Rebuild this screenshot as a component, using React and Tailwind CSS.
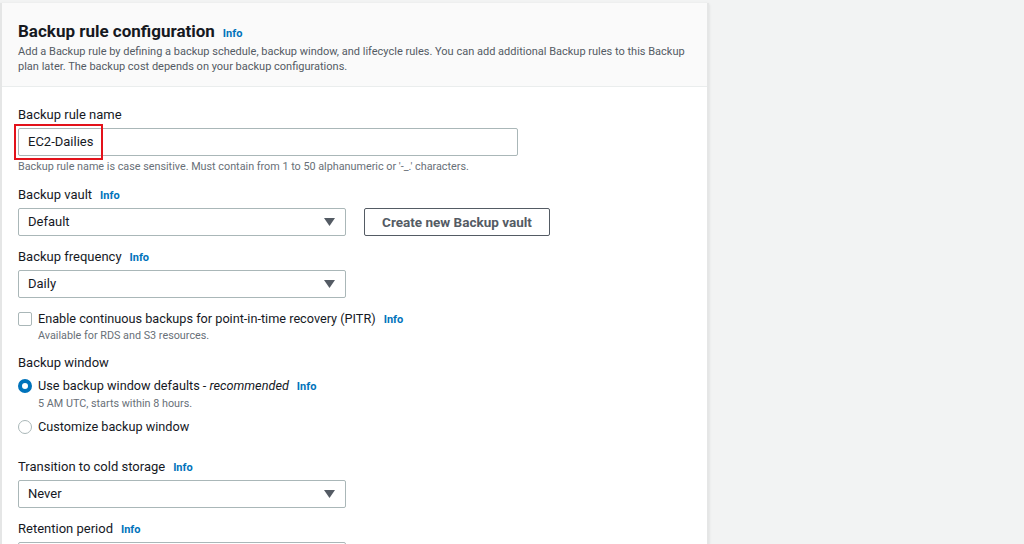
import React from 'react';

const font = { fontFamily: 'Roboto, "Liberation Sans", sans-serif' };

function Info() {
    return <span className="text-[11px] font-bold text-[#0073bb] ml-2 leading-none">Info</span>;
}

function Caret() {
    return (
        <svg width="11" height="8" viewBox="0 0 11 8" className="fill-[#545b64]">
            <path d="M0 0h11L5.5 8z" />
        </svg>
    );
}

function Select({ value, width = 'w-[328px]' }) {
    return (
        <div className={`${width} h-[28px] border border-[#aab7b8] rounded-[2px] bg-white flex items-center justify-between pl-[9px] pr-[10px]`}>
            <span className="text-[13px] text-[#16191f]">{value}</span>
            <Caret />
        </div>
    );
}

function Label({ children, info }) {
    return (
        <div className="text-[13px] text-[#16191f] leading-[16px] mb-[5px]">
            {children}
            {info && <Info />}
        </div>
    );
}

export default function App() {
    return (
        <div className="w-[1024px] h-[544px] bg-[#f2f3f3] overflow-hidden pt-[3px]" style={font}>
            <div className="w-[709px] h-full bg-white border-l-2 border-r-2 border-[#e5e6e6] shadow-sm">
                {/* Header */}
                <div className="h-[84px] bg-[#fafafa] border-b border-[#eaeded] px-[16px] pt-[17px]">
                    <div className="leading-[22px]">
                        <span className="text-[17px] font-bold text-[#16191f]">Backup rule configuration</span>
                        <Info />
                    </div>
                    <p className="text-[11px] text-[#545b64] leading-[15px] mt-[1px]">
                        Add a Backup rule by defining a backup schedule, backup window, and lifecycle rules. You can add additional Backup rules to this Backup plan later. The backup cost depends on your backup configurations.
                    </p>
                </div>

                {/* Body */}
                <div className="px-[16px] pt-[20px]">
                    <Label>Backup rule name</Label>
                    <div className="relative w-[500px] h-[28px] border border-[#aab7b8] rounded-[2px] flex items-center pl-[9px]">
                        <span className="text-[13px] text-[#16191f]">EC2-Dailies</span>
                        <div className="absolute left-[-5px] top-[-5px] w-[89px] h-[36px] border-2 border-[#e3121b]"></div>
                    </div>
                    <p className="text-[10.8px] text-[#687078] mt-[4px] leading-[14px]">
                        Backup rule name is case sensitive. Must contain from 1 to 50 alphanumeric or '-_.' characters.
                    </p>

                    <div className="mt-[13px]">
                        <Label info>Backup vault</Label>
                        <div className="flex gap-[18px]">
                            <Select value="Default" />
                            <div className="w-[186px] h-[28px] border border-[#545b64] rounded-[2px] flex items-center justify-center text-[13.5px] font-bold text-[#545b64]">
                                Create new Backup vault
                            </div>
                        </div>
                    </div>

                    <div className="mt-[13px]">
                        <Label info>Backup frequency</Label>
                        <Select value="Daily" />
                    </div>

                    <div className="mt-[13px] flex gap-[6px]">
                        <div className="w-[14px] h-[14px] border border-[#aab7b8] rounded-[2px] mt-[1px] shrink-0"></div>
                        <div>
                            <div className="text-[12.7px] text-[#16191f] leading-[16px]">
                                Enable continuous backups for point-in-time recovery (PITR)<Info />
                            </div>
                            <div className="text-[10.8px] text-[#687078] leading-[14px] mt-[2px]">Available for RDS and S3 resources.</div>
                        </div>
                    </div>

                    <div className="mt-[12px]">
                        <Label>Backup window</Label>
                        <div className="flex gap-[6px] mt-[7px]">
                            <div className="w-[14px] h-[14px] rounded-full border-[4px] border-[#0073bb] mt-[1px] shrink-0"></div>
                            <div>
                                <div className="text-[12.7px] text-[#16191f] leading-[16px]">
                                    Use backup window defaults - <i>recommended</i><Info />
                                </div>
                                <div className="text-[10.8px] text-[#687078] leading-[14px] mt-[3px]">5 AM UTC, starts within 8 hours.</div>
                            </div>
                        </div>
                        <div className="flex gap-[6px] mt-[8px]">
                            <div className="w-[14px] h-[14px] rounded-full border border-[#aab7b8] mt-[1px] shrink-0"></div>
                            <div className="text-[12.7px] text-[#16191f] leading-[16px]">Customize backup window</div>
                        </div>
                    </div>

                    <div className="mt-[24px]">
                        <Label info>Transition to cold storage</Label>
                        <Select value="Never" />
                    </div>

                    <div className="mt-[13px]">
                        <Label info>Retention period</Label>
                        <Select value="" />
                    </div>
                </div>
            </div>
        </div>
    );
}
